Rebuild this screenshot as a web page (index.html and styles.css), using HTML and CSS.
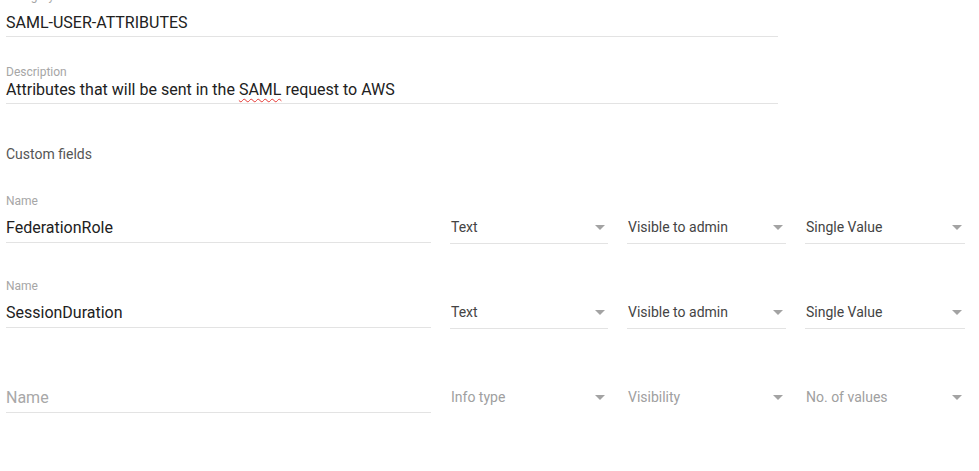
FILE: index.html
```html
<!DOCTYPE html>
<html lang="en">
<head>
<meta charset="utf-8">
<title>Custom fields</title>
<link rel="stylesheet" href="styles.css">
</head>
<body>
<div class="page">
  <div class="field field-wide field-first">
    <div class="label">Category</div>
    <div class="value">SAML-USER-ATTRIBUTES</div>
  </div>
  <div class="field field-wide field-desc">
    <div class="label">Description</div>
    <div class="value">Attributes that will be sent in the <span class="misspelt">SAML</span> request to AWS</div>
  </div>

  <div class="section-title">Custom fields</div>

  <div class="cf-row">
    <div class="field field-name">
      <div class="label label-gap">Name</div>
      <div class="value">FederationRole</div>
    </div>
    <div class="select"><span class="sel-text">Text</span><span class="caret"></span></div>
    <div class="select"><span class="sel-text">Visible to admin</span><span class="caret"></span></div>
    <div class="select"><span class="sel-text">Single Value</span><span class="caret"></span></div>
  </div>

  <div class="cf-row">
    <div class="field field-name">
      <div class="label label-gap">Name</div>
      <div class="value">SessionDuration</div>
    </div>
    <div class="select"><span class="sel-text">Text</span><span class="caret"></span></div>
    <div class="select"><span class="sel-text">Visible to admin</span><span class="caret"></span></div>
    <div class="select"><span class="sel-text">Single Value</span><span class="caret"></span></div>
  </div>

  <div class="cf-row">
    <div class="field field-name">
      <div class="label label-gap label-empty"></div>
      <div class="value placeholder">Name</div>
    </div>
    <div class="select"><span class="sel-text placeholder">Info type</span><span class="caret"></span></div>
    <div class="select"><span class="sel-text placeholder">Visibility</span><span class="caret"></span></div>
    <div class="select"><span class="sel-text placeholder">No. of values</span><span class="caret"></span></div>
  </div>
</div>
</body>
</html>
```

FILE: styles.css
```css
html, body {
  margin: 0;
  padding: 0;
  background: #ffffff;
  overflow: hidden;
}

body {
  font-family: Roboto, "Noto Sans", "Liberation Sans", sans-serif;
  color: #212121;
}

.page {
  padding-left: 6px;
}

.field {
  border-bottom: 1px solid #e3e3e3;
}

.field-wide {
  width: 772px;
}

.label {
  font-size: 12px;
  line-height: 14px;
  height: 14px;
  color: #a6a6a6;
}

.value {
  font-size: 16px;
  line-height: 20px;
  height: 20px;
  padding-bottom: 4px;
  color: #212121;
  white-space: nowrap;
}

.field-first {
  margin-top: -11px;
}

.field-first .label {
  margin-bottom: 9px;
}

.field-first .value {
  line-height: 22px;
  height: 22px;
  padding-bottom: 2px;
}

.field-desc {
  margin-top: 28px;
}

.field-desc .value {
  line-height: 22px;
  height: 22px;
  padding-bottom: 2px;
}

.misspelt {
  text-decoration: underline wavy #e53935;
  text-decoration-thickness: 1px;
  text-underline-offset: 3px;
}

.section-title {
  margin-top: 40px;
  font-size: 14px;
  line-height: 20px;
  color: #555555;
}

.cf-row {
  display: grid;
  grid-template-columns: 425px 158px 159px 160px;
  column-gap: 19px;
  align-items: end;
  margin-top: 36px;
}

.section-title + .cf-row {
  margin-top: 30px;
}

.label-gap {
  margin-bottom: 10px;
}

.placeholder {
  color: #a8a8a8;
}

.select {
  display: flex;
  align-items: center;
  justify-content: space-between;
  height: 24px;
  border-bottom: 1px solid #e3e3e3;
  margin-bottom: -1px;
}

.sel-text {
  font-size: 14px;
  line-height: 17px;
  padding: 0 0 7px 1px;
  color: #444444;
  white-space: nowrap;
}

.sel-text.placeholder {
  color: #a0a0a0;
}

.caret {
  width: 0;
  height: 0;
  border-left: 5px solid transparent;
  border-right: 5px solid transparent;
  border-top: 5px solid #a3a3a3;
  margin-right: 3px;
  margin-bottom: 8px;
}
```
